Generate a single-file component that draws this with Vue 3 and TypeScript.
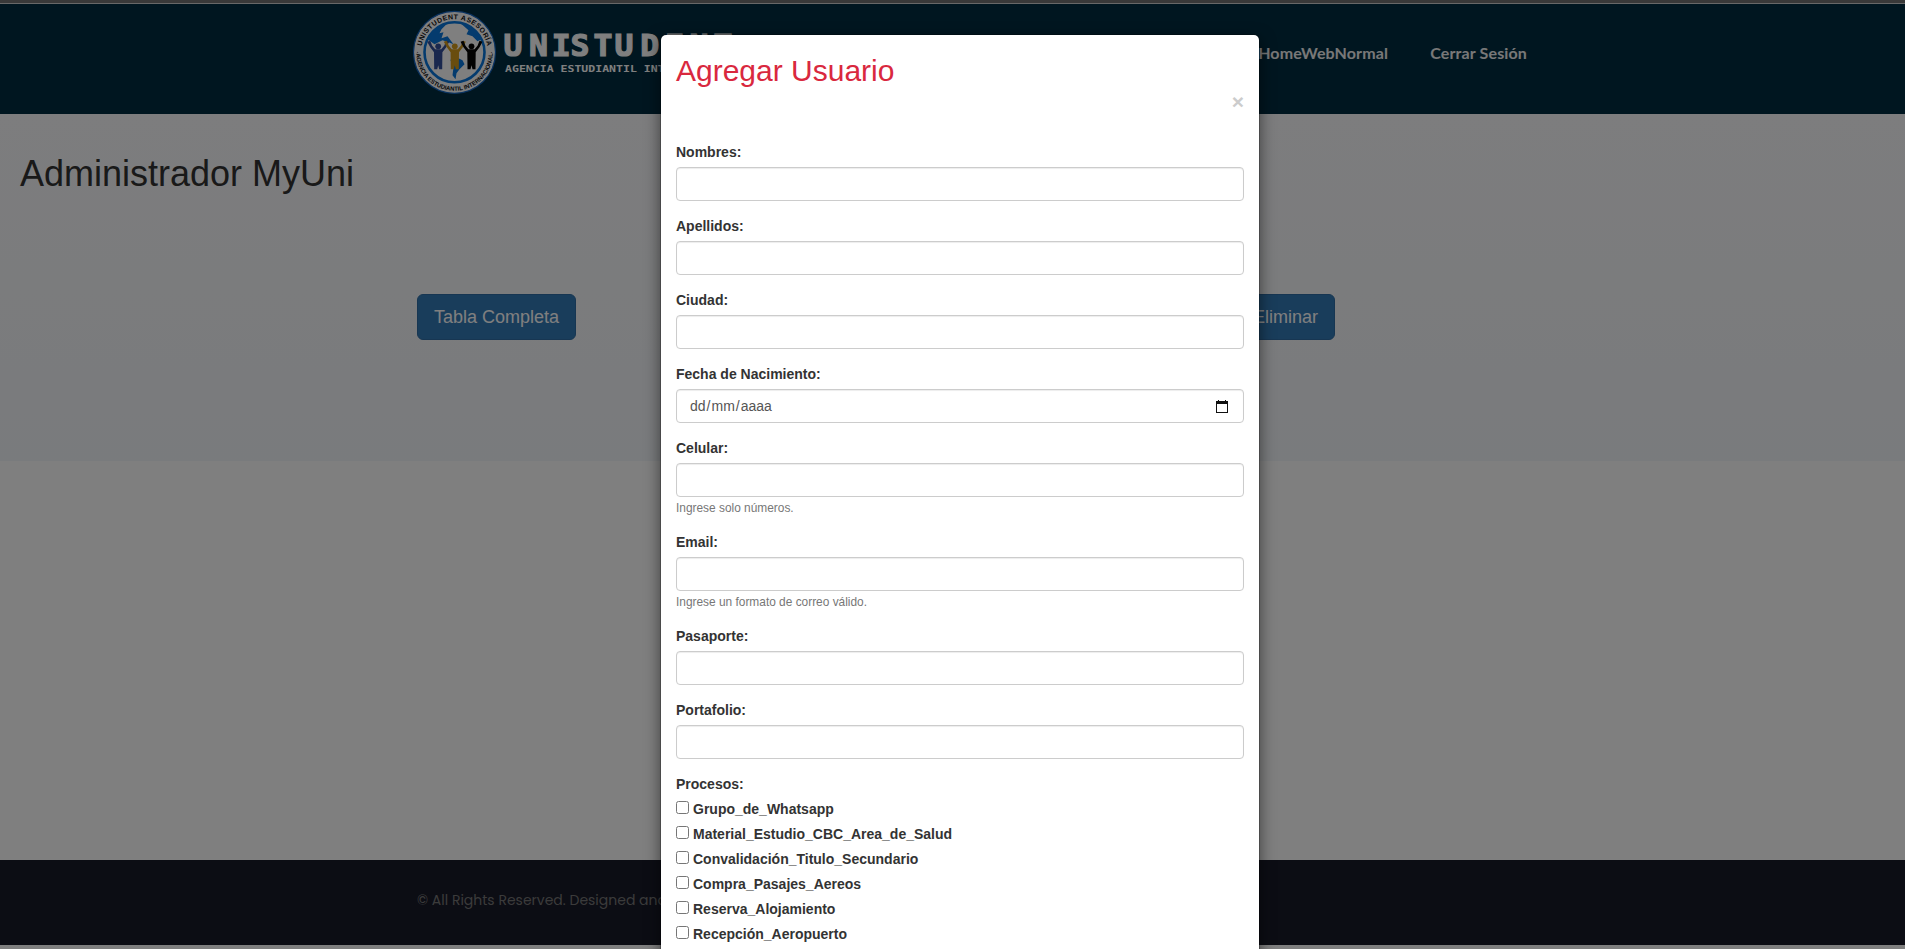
<script setup lang="ts">
import { ref } from 'vue'

interface Field {
  id: string
  label: string
  type: 'text' | 'date'
  help?: string
}

const fields: Field[] = [
  { id: 'nombres', label: 'Nombres:', type: 'text' },
  { id: 'apellidos', label: 'Apellidos:', type: 'text' },
  { id: 'ciudad', label: 'Ciudad:', type: 'text' },
  { id: 'nacimiento', label: 'Fecha de Nacimiento:', type: 'date' },
  { id: 'celular', label: 'Celular:', type: 'text', help: 'Ingrese solo números.' },
  { id: 'email', label: 'Email:', type: 'text', help: 'Ingrese un formato de correo válido.' },
  { id: 'pasaporte', label: 'Pasaporte:', type: 'text' },
  { id: 'portafolio', label: 'Portafolio:', type: 'text' },
]

const procesos: string[] = [
  'Grupo_de_Whatsapp',
  'Material_Estudio_CBC_Area_de_Salud',
  'Convalidación_Titulo_Secundario',
  'Compra_Pasajes_Aereos',
  'Reserva_Alojamiento',
  'Recepción_Aeropuerto',
]

const people = [
  { x: -16.3, color: '#34509c' },
  { x: 0.3, color: '#d29a1c' },
  { x: 17, color: '#050505' },
]

const values = ref<Record<string, string>>({})
const selected = ref<string[]>([])
</script>

<template>
  <div class="page">
    <div class="topline"></div>
    <header class="navbar">
      <svg class="logo" width="330" height="96" viewBox="0 0 330 96">
        <defs>
          <path id="ring-top" d="M -33.4 3 A 33.5 33.5 0 1 1 33.4 3" />
          <path id="ring-bottom" d="M -37.8 -6 A 38.3 38.3 0 1 0 37.8 -6" />
        </defs>
        <g transform="translate(41.5 48.3)">
          <circle r="41" fill="#fff" stroke="#1467c4" stroke-width="1.2" />
          <circle r="30" fill="#fff" stroke="#0877dc" stroke-width="2.6" />
          <path
            fill="#0877dc"
            d="M-27 -13 L-22 -21 L-14 -27 L-7 -29 L-13 -23 L-15 -19 L-11 -20 L-13 -14 L-7 -16 L-4 -12 L-1 -8 L-6 -10 L-12 -12 L-20 -8 Z M6 -29 L14 -27 L22 -21 L27 -13 L23 -11 L18 -16 L12 -18 L14 -22 Z M-2 3 L8 8 L10 12 L5 17 L2 21 L1 27 L-2 23 L-1 15 L-4 8 Z"
          />
          <g v-for="p in people" :key="p.color" :transform="`translate(${p.x} 0)`" :fill="p.color">
            <circle cy="-6" r="2.9" />
            <path
              d="M-11 -10.5 L-8 -11.5 L-6 -6.5 L-3 -3 L3 -3 L6 -6.5 L8 -11.5 L11 -10.5 L8 -5 L4.2 0 L4 17 L1 17 L0 13 L-1 17 L-4 17 L-4.2 0 L-8 -5 Z"
            />
          </g>
          <text class="ring-text">
            <textPath href="#ring-top" startOffset="50%" text-anchor="middle" textLength="92">UNISTUDENT ASESORÍA</textPath>
          </text>
          <text class="ring-text ring-text-small">
            <textPath href="#ring-bottom" startOffset="50%" text-anchor="middle" textLength="122">·AGENCIA ESTUDIANTIL INTERNACIONAL·</textPath>
          </text>
        </g>
        <text class="brand" transform="translate(0 51.5) scale(1.05 1)" x="86.3 110.6 132.2 149.9 171.9 192 216.5 239.9 263.3 286.2">UNISTUDENT</text>
        <text class="tagline" x="92" y="68" textLength="229" lengthAdjust="spacingAndGlyphs">AGENCIA ESTUDIANTIL INTERNACIONAL</text>
      </svg>
      <nav class="links">
        <a class="link">HomeWebNormal</a>
        <a class="link">Cerrar Sesión</a>
      </nav>
    </header>

    <main class="content">
      <h1 class="title">Administrador MyUni</h1>
      <div class="actions">
        <button class="btn">Tabla Completa</button>
        <button class="btn">Eliminar</button>
      </div>
    </main>

    <footer class="footer">© All Rights Reserved. Designed and</footer>
  </div>

  <div class="backdrop">
    <section class="modal" role="dialog" aria-labelledby="modal-title">
      <div class="modal-header">
        <h2 id="modal-title" class="modal-title">Agregar Usuario</h2>
        <button class="close" type="button" aria-label="Cerrar">×</button>
      </div>
      <form class="form" @submit.prevent>
        <div v-for="f in fields" :key="f.id" class="group">
          <label class="label" :for="f.id">{{ f.label }}</label>
          <div v-if="f.type === 'date'" :id="f.id" class="control date">
            <span>dd<span class="slash">/</span>mm<span class="slash">/</span>aaaa</span>
            <svg width="12" height="13" viewBox="0 0 12 13" shape-rendering="crispEdges">
              <path d="M2 0h1.4v1h5.2V0H10v1h2v12H0V1h2z M1.2 4v7.8h9.6V4z" fill="#111" fill-rule="evenodd" />
            </svg>
          </div>
          <input v-else :id="f.id" v-model="values[f.id]" class="control" type="text" />
          <small v-if="f.help" class="help">{{ f.help }}</small>
        </div>
        <div class="label">Procesos:</div>
        <label v-for="p in procesos" :key="p" class="check">
          <input v-model="selected" type="checkbox" :value="p" />
          <span>{{ p }}</span>
        </label>
      </form>
    </section>
  </div>
</template>

<style>
html,
body {
  height: 100%;
  overflow: hidden;
  background: #fff;
}
</style>

<style scoped>
* {
  box-sizing: border-box;
}

.page {
  display: flex;
  flex-direction: column;
  width: 1905px;
  height: 949px;
  padding-bottom: 4px;
  background: #fff;
  color: #333;
  font: 14px/20px 'Liberation Sans', Arial, sans-serif;
}

.topline {
  flex: none;
  height: 4px;
  background: #727272;
  border-bottom: 1px solid #d0d0d0;
}

.navbar {
  display: flex;
  flex: none;
  justify-content: space-between;
  height: 110px;
  padding: 0 378px 0 413px;
  background: #002c41;
}

.logo {
  display: block;
}

.ring-text {
  font: bold 7px 'Liberation Sans', sans-serif;
  fill: #111;
}

.ring-text-small {
  font-size: 6px;
}

.brand {
  font: bold 30px 'DejaVu Sans Mono', monospace;
  fill: #fff;
  stroke: #fff;
  stroke-width: 1.2px;
}

.tagline {
  font: bold 9.5px 'DejaVu Sans Mono', monospace;
  fill: #fff;
}

.links {
  display: flex;
  gap: 42px;
  padding-top: 39px;
}

.link {
  color: #f0f0f0;
  font: 700 16px/20px Lato, sans-serif;
  letter-spacing: 0.14px;
}

.content {
  flex: none;
  height: 347px;
  background: linear-gradient(#fafafc, #f3f6fa);
}

.title {
  margin: 0;
  padding: 40px 20px 0;
  font-weight: 500;
  font-size: 36px;
  line-height: 40px;
}

.actions {
  display: flex;
  justify-content: space-between;
  width: 918px;
  margin: 100px 0 0 417px;
}

.btn {
  height: 46px;
  padding: 0 16px;
  border: 1px solid #2e6da4;
  border-radius: 6px;
  background: #337ab7;
  color: #fff;
  font: 18px/24px 'Liberation Sans', Arial, sans-serif;
}

.footer {
  height: 85px;
  margin-top: auto;
  padding: 28px 417px;
  background: #191a28;
  color: #777;
  font: 14px/24px Poppins, Inter, sans-serif;
}

.backdrop {
  position: absolute;
  top: 0;
  left: 0;
  display: flex;
  justify-content: center;
  width: 1905px;
  height: 949px;
  padding: 34px 0 0 15px;
  overflow: hidden;
  background: rgba(0, 0, 0, 0.5);
  color: #333;
  font: 14px/20px 'Liberation Sans', Arial, sans-serif;
}

.modal {
  width: 600px;
  height: 1100px;
  border: 1px solid rgba(0, 0, 0, 0.2);
  border-radius: 6px;
  background: #fff;
  background-clip: padding-box;
  box-shadow: 0 5px 15px rgba(0, 0, 0, 0.5);
}

.modal-header {
  display: flex;
  flex-direction: column;
  height: 92px;
  padding: 19px 15px 0;
}

.modal-title {
  margin: 0;
  color: #d9283e;
  font-weight: 500;
  font-size: 30px;
  line-height: 33px;
}

.close {
  align-self: flex-end;
  margin-top: 4px;
  padding: 0;
  border: 0;
  background: none;
  color: #ccc;
  font: bold 21px/21px 'Liberation Sans', Arial, sans-serif;
}

.form {
  padding: 15px;
}

.group {
  margin-bottom: 15px;
}

.label {
  display: block;
  margin-bottom: 5px;
  font-weight: 700;
}

.control {
  display: block;
  width: 100%;
  height: 34px;
  padding: 6px 12px;
  border: 1px solid #ccc;
  border-radius: 4px;
  background: #fff;
  box-shadow: inset 0 1px 1px rgba(0, 0, 0, 0.075);
  color: #555;
  font: 14px/20px 'Liberation Sans', Arial, sans-serif;
}

.date {
  display: flex;
  align-items: center;
  justify-content: space-between;
  padding: 6px 15px 6px 13px;
}

.slash {
  padding: 0 1px;
}

.help {
  display: block;
  height: 20px;
  padding-top: 1px;
  color: #777;
  font-size: 11.9px;
  line-height: 20px;
}

.check {
  display: flex;
  gap: 4px;
  margin-bottom: 5px;
  font-weight: 700;
}

.check input {
  width: 13px;
  height: 13px;
  margin: 2px 0 0;
}
</style>
